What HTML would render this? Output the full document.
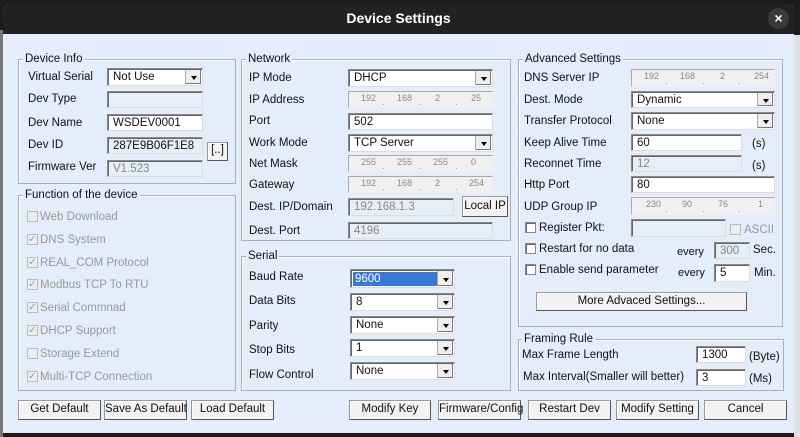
<!DOCTYPE html>
<html><head><meta charset="utf-8"><style>
*{box-sizing:border-box;margin:0;padding:0}
body{width:800px;height:437px;background:#1c1c1c;position:relative;overflow:hidden;font-family:"Liberation Sans",sans-serif;font-size:11.5px;color:#111}
.a{position:absolute}
#dlg{position:absolute;left:3px;top:4px;width:791px;height:429px;background:#e4eefa;border-radius:6px 6px 0 0;overflow:hidden}
#tb{position:absolute;left:0;top:0;width:791px;height:30px;background:#222;color:#fff;font-weight:bold;font-size:14px;text-align:center;line-height:29px}
.g{position:absolute;border:1px solid #a8b0b8;box-shadow:inset 1px 1px 0 #fff}
.gl{position:absolute;background:#e4eefa;padding:0 2px;line-height:13px}
.l{position:absolute;line-height:14px;white-space:nowrap}
.f{position:absolute;background:#fff;border:1px solid #8a8a8a;border-right-color:#ddd;border-bottom-color:#ddd;box-shadow:inset 1px 1px 0 #666;padding-left:5px;display:flex;align-items:center;white-space:nowrap;overflow:hidden}
.d{background:#e6eef7;color:#888}
.s:after{content:"";position:absolute;right:1px;top:1px;bottom:1px;width:15px;background:#eee;border-left:1px solid #aaa;box-shadow:inset -1px -1px 0 #777}
.s:before{content:"";position:absolute;right:5px;top:50%;margin-top:-1px;border:3px solid transparent;border-top:4px solid #000;z-index:2}
.ip{position:absolute;background:#f0f0f0;border:1px solid #aaa;border-right-color:#eee;border-bottom-color:#eee;font-size:9px;color:#888}
.ip span{position:absolute;top:1px}
.ip i{position:absolute;bottom:0;font-style:normal;font-size:9px}
.b{position:absolute;background:#f2f2f2;border:1px solid #999;border-right-color:#555;border-bottom-color:#555;box-shadow:inset 1px 1px 0 #fff;text-align:center;line-height:17px;white-space:nowrap}
.cb{position:absolute;width:11px;height:11px;border:1px solid #888;background:#fff;box-shadow:inset 1px 1px 0 #666}
.cd{background:#eee;border-color:#bbb;box-shadow:none;color:#999;font-size:10px;line-height:9px;text-align:center}
.gr{color:#999}
</style></head><body>
<div class="a" style="left:794px;top:35px;width:6px;height:402px;background:#dfe3e8"></div>
<div class="a" style="left:0;top:30px;width:3px;height:407px;background:#777"></div>
<div id="dlg">
<div id="tb">Device Settings</div>
<div class="a" style="left:765px;top:4px;width:21px;height:21px;border-radius:50%;background:#3a3a3a;color:#fff;font-weight:bold;font-size:14px;text-align:center;line-height:20px">×</div>
</div>
<!-- Device Info -->
<div class="g" style="left:18px;top:59px;width:218px;height:125px"></div><div class="gl" style="left:23px;top:53px">Device Info</div>
<div class="l" style="left:28px;top:70px">Virtual Serial</div><div class="f s" style="left:107px;top:68px;width:96px;height:18px">Not Use</div>
<div class="l" style="left:28px;top:92px">Dev Type</div><div class="f d" style="left:107px;top:91px;width:96px;height:17px"></div>
<div class="l" style="left:28px;top:116px">Dev Name</div><div class="f" style="left:107px;top:114px;width:96px;height:17px">WSDEV0001</div>
<div class="l" style="left:28px;top:138px">Dev ID</div><div class="f d" style="left:107px;top:137px;width:96px;height:17px;color:#111">287E9B06F1E8</div>
<div class="b" style="left:207px;top:142px;width:21px;height:19px;line-height:15px">[..]</div>
<div class="l" style="left:28px;top:160px">Firmware Ver</div><div class="f d" style="left:107px;top:160px;width:96px;height:17px">V1.523</div>
<!-- Function -->
<div class="g" style="left:18px;top:195px;width:218px;height:196px"></div><div class="gl" style="left:23px;top:189px">Function of the device</div>
<div class="cb cd" style="left:27px;top:211px"></div><div class="l gr" style="left:40px;top:210px">Web Download</div>
<div class="cb cd" style="left:27px;top:234px">✓</div><div class="l gr" style="left:40px;top:233px">DNS System</div>
<div class="cb cd" style="left:27px;top:257px">✓</div><div class="l gr" style="left:40px;top:256px">REAL_COM Protocol</div>
<div class="cb cd" style="left:27px;top:279px">✓</div><div class="l gr" style="left:40px;top:278px">Modbus TCP To RTU</div>
<div class="cb cd" style="left:27px;top:302px">✓</div><div class="l gr" style="left:40px;top:301px">Serial Commnad</div>
<div class="cb cd" style="left:27px;top:325px">✓</div><div class="l gr" style="left:40px;top:324px">DHCP Support</div>
<div class="cb cd" style="left:27px;top:348px"></div><div class="l gr" style="left:40px;top:347px">Storage Extend</div>
<div class="cb cd" style="left:27px;top:371px">✓</div><div class="l gr" style="left:40px;top:370px">Multi-TCP Connection</div>
<!-- Network -->
<div class="g" style="left:241px;top:59px;width:270px;height:182px"></div><div class="gl" style="left:246px;top:53px">Network</div>
<div class="l" style="left:249px;top:71px">IP Mode</div><div class="f s" style="left:348px;top:69px;width:145px;height:18px">DHCP</div>
<div class="l" style="left:249px;top:93px">IP Address</div><div class="ip" style="left:348px;top:91px;width:145px;height:17px"><span style="left:12px">192</span><i style="left:33px">.</i><span style="left:48px">168</span><i style="left:70px">.</i><span style="left:86px">2</span><i style="left:106px">.</i><span style="left:122px">25</span></div>
<div class="l" style="left:249px;top:114px">Port</div><div class="f" style="left:348px;top:113px;width:145px;height:17px">502</div>
<div class="l" style="left:249px;top:136px">Work Mode</div><div class="f s" style="left:348px;top:134px;width:145px;height:18px">TCP Server</div>
<div class="l" style="left:249px;top:157px">Net Mask</div><div class="ip" style="left:348px;top:155px;width:145px;height:17px"><span style="left:12px">255</span><i style="left:33px">.</i><span style="left:48px">255</span><i style="left:70px">.</i><span style="left:84px">255</span><i style="left:106px">.</i><span style="left:122px">0</span></div>
<div class="l" style="left:249px;top:178px">Gateway</div><div class="ip" style="left:348px;top:176px;width:145px;height:17px"><span style="left:12px">192</span><i style="left:33px">.</i><span style="left:48px">168</span><i style="left:70px">.</i><span style="left:86px">2</span><i style="left:106px">.</i><span style="left:120px">254</span></div>
<div class="l" style="left:249px;top:200px">Dest. IP/Domain</div><div class="f d" style="left:348px;top:198px;width:106px;height:18px">192.168.1.3</div>
<div class="b" style="left:462px;top:196px;width:46px;height:21px;line-height:19px">Local IP</div>
<div class="l" style="left:249px;top:224px">Dest. Port</div><div class="f d" style="left:348px;top:222px;width:145px;height:17px">4196</div>
<!-- Serial -->
<div class="g" style="left:241px;top:256px;width:270px;height:135px"></div><div class="gl" style="left:246px;top:250px">Serial</div>
<div class="l" style="left:249px;top:270px">Baud Rate</div><div class="f s" style="left:350px;top:269px;width:105px;height:19px"><span style="background:#3a78d8;color:#fff;display:block;margin-left:-3px;width:84px;padding-left:2px;line-height:14px">9600</span></div>
<div class="l" style="left:249px;top:294px">Data Bits</div><div class="f s" style="left:350px;top:293px;width:105px;height:18px">8</div>
<div class="l" style="left:249px;top:319px">Parity</div><div class="f s" style="left:350px;top:316px;width:105px;height:18px">None</div>
<div class="l" style="left:249px;top:343px">Stop Bits</div><div class="f s" style="left:350px;top:339px;width:105px;height:18px">1</div>
<div class="l" style="left:249px;top:368px">Flow Control</div><div class="f s" style="left:350px;top:362px;width:105px;height:18px">None</div>
<!-- Advanced -->
<div class="g" style="left:518px;top:59px;width:265px;height:268px"></div><div class="gl" style="left:523px;top:53px">Advanced Settings</div>
<div class="l" style="left:524px;top:71px">DNS Server IP</div><div class="ip" style="left:631px;top:69px;width:144px;height:18px"><span style="left:12px">192</span><i style="left:33px">.</i><span style="left:48px">168</span><i style="left:70px">.</i><span style="left:88px">2</span><i style="left:106px">.</i><span style="left:122px">254</span></div>
<div class="l" style="left:524px;top:93px">Dest. Mode</div><div class="f s" style="left:631px;top:91px;width:144px;height:17px">Dynamic</div>
<div class="l" style="left:524px;top:114px">Transfer Protocol</div><div class="f s" style="left:631px;top:112px;width:144px;height:18px">None</div>
<div class="l" style="left:524px;top:136px">Keep Alive Time</div><div class="f" style="left:631px;top:134px;width:111px;height:17px">60</div><div class="l" style="left:752px;top:137px">(s)</div>
<div class="l" style="left:524px;top:157px">Reconnet Time</div><div class="f d" style="left:631px;top:155px;width:111px;height:17px">12</div><div class="l" style="left:752px;top:159px">(s)</div>
<div class="l" style="left:524px;top:178px">Http Port</div><div class="f" style="left:631px;top:176px;width:144px;height:17px">80</div>
<div class="l" style="left:524px;top:200px">UDP Group IP</div><div class="ip" style="left:631px;top:197px;width:144px;height:18px"><span style="left:14px">230</span><i style="left:33px">.</i><span style="left:50px">90</span><i style="left:70px">.</i><span style="left:86px">76</span><i style="left:106px">.</i><span style="left:126px">1</span></div>
<div class="cb" style="left:525px;top:222px"></div><div class="l" style="left:539px;top:221px">Register Pkt:</div><div class="f d" style="left:631px;top:219px;width:95px;height:18px"></div>
<div class="cb cd" style="left:730px;top:224px"></div><div class="l gr" style="left:744px;top:223px">ASCII</div>
<div class="cb" style="left:525px;top:243px"></div><div class="l" style="left:539px;top:242px">Restart for no data</div><div class="l" style="left:677px;top:245px;font-size:11px">every</div>
<div class="f d" style="left:714px;top:242px;width:36px;height:17px">300</div><div class="l" style="left:753px;top:243px">Sec.</div>
<div class="cb" style="left:525px;top:264px"></div><div class="l" style="left:539px;top:263px">Enable send parameter</div><div class="l" style="left:678px;top:266px;font-size:11px">every</div>
<div class="f" style="left:714px;top:264px;width:36px;height:18px">5</div><div class="l" style="left:754px;top:266px">Min.</div>
<div class="b" style="left:536px;top:292px;width:211px;height:19px">More Advaced Settings...</div>
<!-- Framing -->
<div class="g" style="left:518px;top:339px;width:266px;height:52px"></div><div class="gl" style="left:522px;top:333px">Framing Rule</div>
<div class="l" style="left:522px;top:348px">Max Frame Length</div><div class="f" style="left:696px;top:346px;width:50px;height:17px">1300</div><div class="l" style="left:749px;top:350px">(Byte)</div>
<div class="l" style="left:523px;top:370px">Max Interval(Smaller will better)</div><div class="f" style="left:696px;top:369px;width:50px;height:17px">3</div><div class="l" style="left:749px;top:372px">(Ms)</div>
<!-- Buttons -->
<div class="b" style="left:18px;top:400px;width:83px;height:20px">Get Default</div>
<div class="b" style="left:104px;top:400px;width:83px;height:20px">Save As Default</div>
<div class="b" style="left:191px;top:400px;width:83px;height:20px">Load Default</div>
<div class="b" style="left:349px;top:400px;width:82px;height:20px">Modify Key</div>
<div class="b" style="left:438px;top:400px;width:83px;height:20px">Firmware/Config</div>
<div class="b" style="left:528px;top:400px;width:83px;height:20px">Restart Dev</div>
<div class="b" style="left:616px;top:400px;width:83px;height:20px">Modify Setting</div>
<div class="b" style="left:704px;top:400px;width:83px;height:20px">Cancel</div>
</body></html>
